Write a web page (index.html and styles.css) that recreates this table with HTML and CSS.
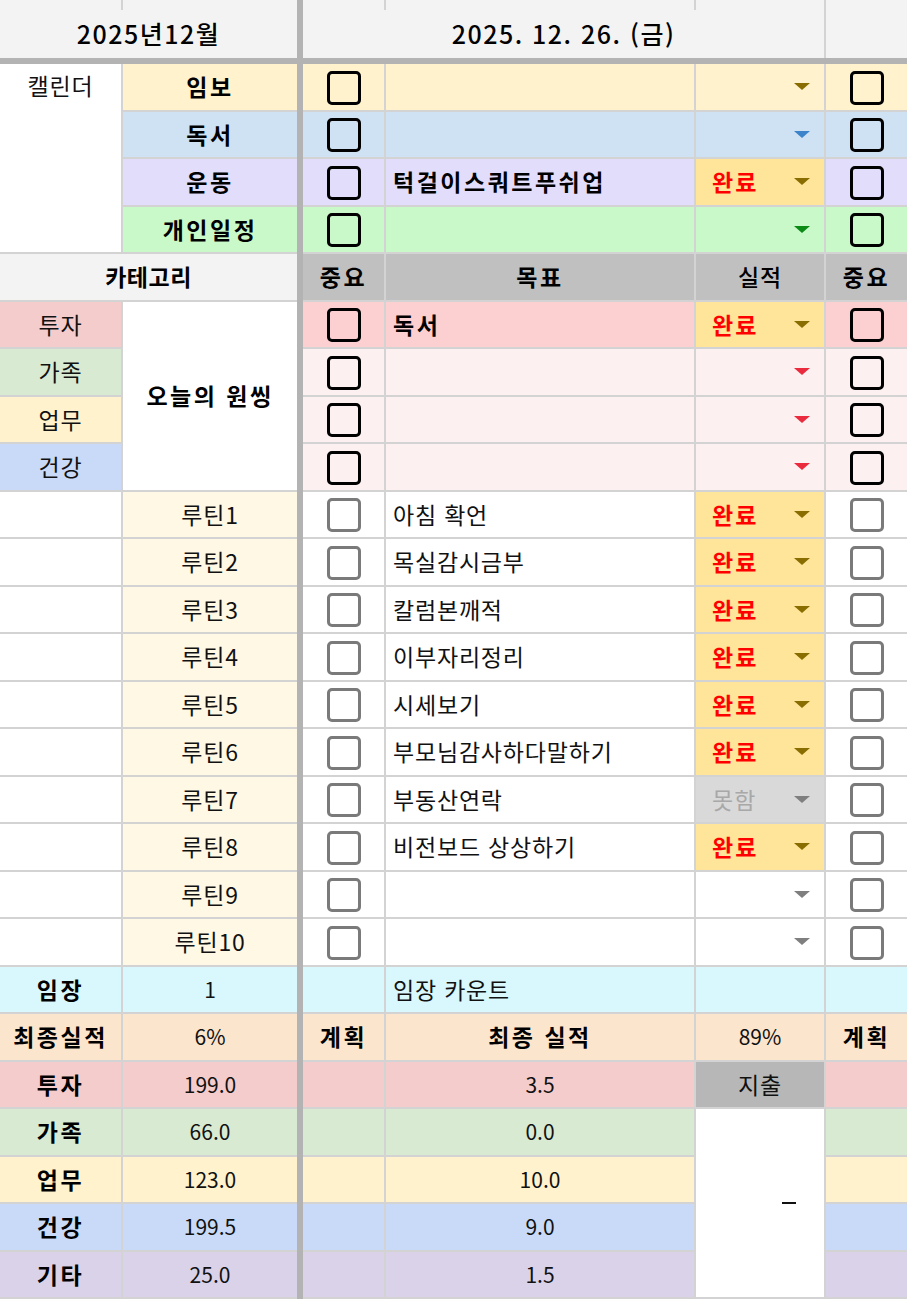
FILE: index.html
```html
<!DOCTYPE html>
<html lang="ko">
<head>
<meta charset="utf-8">
<title>2025년12월</title>
<link rel="stylesheet" href="styles.css">
</head>
<body>
<div class="sheet">
  <div class="side left">
    <div class="head head-left">
      <div class="stub"></div><div class="stub"></div>
      <div class="title span2">2025년12월</div>
    </div>
    <div class="hsep"></div>
    <div class="grid grid-left">
      <div class="c top rows4">캘린더</div>
      <div class="c b yellow">임보</div>
      <div class="c b blue">독서</div>
      <div class="c b lav">운동</div>
      <div class="c b green">개인일정</div>
      <div class="c b span2 hdr tight">카테고리</div>
      <div class="c pink">투자</div>
      <div class="c b rows4">오늘의 원씽</div>
      <div class="c sage">가족</div>
      <div class="c yellow">업무</div>
      <div class="c sky">건강</div>
      <div class="c"></div><div class="c cream">루틴1</div>
      <div class="c"></div><div class="c cream">루틴2</div>
      <div class="c"></div><div class="c cream">루틴3</div>
      <div class="c"></div><div class="c cream">루틴4</div>
      <div class="c"></div><div class="c cream">루틴5</div>
      <div class="c"></div><div class="c cream">루틴6</div>
      <div class="c"></div><div class="c cream">루틴7</div>
      <div class="c"></div><div class="c cream">루틴8</div>
      <div class="c"></div><div class="c cream">루틴9</div>
      <div class="c"></div><div class="c cream">루틴10</div>
      <div class="c b cyan">임장</div><div class="c cyan num">1</div>
      <div class="c b peach">최종실적</div><div class="c peach num">6%</div>
      <div class="c b pink">투자</div><div class="c pink num">199.0</div>
      <div class="c b sage">가족</div><div class="c sage num">66.0</div>
      <div class="c b yellow">업무</div><div class="c yellow num">123.0</div>
      <div class="c b sky">건강</div><div class="c sky num">199.5</div>
      <div class="c b purple">기타</div><div class="c purple num">25.0</div>
    </div>
  </div>
  <div class="vsep"></div>
  <div class="side right">
    <div class="head head-right">
      <div class="stub"></div><div class="stub"></div><div class="stub"></div>
      <div class="fcol"></div>
      <div class="title span3">2025. 12. 26. (금)</div>
    </div>
    <div class="hsep"></div>
    <div class="grid grid-right">
      <!-- calendar rows -->
      <div class="c yellow"><span class="cb"></span></div>
      <div class="c yellow txt"></div>
      <div class="c yellow dd"><span class="tri gold"></span></div>
      <div class="c yellow"><span class="cb"></span></div>

      <div class="c blue"><span class="cb"></span></div>
      <div class="c blue txt"></div>
      <div class="c blue dd"><span class="tri blue-t"></span></div>
      <div class="c blue"><span class="cb"></span></div>

      <div class="c lav"><span class="cb"></span></div>
      <div class="c lav txt b">턱걸이스쿼트푸쉬업</div>
      <div class="c done dd"><span class="done-t">완료</span><span class="tri gold"></span></div>
      <div class="c lav"><span class="cb"></span></div>

      <div class="c green"><span class="cb"></span></div>
      <div class="c green txt"></div>
      <div class="c green dd"><span class="tri green-t"></span></div>
      <div class="c green"><span class="cb"></span></div>

      <!-- header -->
      <div class="c gray b">중요</div>
      <div class="c gray b">목표</div>
      <div class="c gray m">실적</div>
      <div class="c gray b">중요</div>

      <!-- one thing -->
      <div class="c rose"><span class="cb"></span></div>
      <div class="c rose txt b">독서</div>
      <div class="c done dd"><span class="done-t">완료</span><span class="tri gold"></span></div>
      <div class="c rose"><span class="cb"></span></div>

      <div class="c blush"><span class="cb"></span></div>
      <div class="c blush txt"></div>
      <div class="c blush dd"><span class="tri red-t"></span></div>
      <div class="c blush"><span class="cb"></span></div>

      <div class="c blush"><span class="cb"></span></div>
      <div class="c blush txt"></div>
      <div class="c blush dd"><span class="tri red-t"></span></div>
      <div class="c blush"><span class="cb"></span></div>

      <div class="c blush"><span class="cb"></span></div>
      <div class="c blush txt"></div>
      <div class="c blush dd"><span class="tri red-t"></span></div>
      <div class="c blush"><span class="cb"></span></div>

      <!-- routines -->
      <div class="c"><span class="cb g"></span></div>
      <div class="c txt">아침 확언</div>
      <div class="c done dd"><span class="done-t">완료</span><span class="tri gold"></span></div>
      <div class="c"><span class="cb g"></span></div>

      <div class="c"><span class="cb g"></span></div>
      <div class="c txt">목실감시금부</div>
      <div class="c done dd"><span class="done-t">완료</span><span class="tri gold"></span></div>
      <div class="c"><span class="cb g"></span></div>

      <div class="c"><span class="cb g"></span></div>
      <div class="c txt">칼럼본깨적</div>
      <div class="c done dd"><span class="done-t">완료</span><span class="tri gold"></span></div>
      <div class="c"><span class="cb g"></span></div>

      <div class="c"><span class="cb g"></span></div>
      <div class="c txt">이부자리정리</div>
      <div class="c done dd"><span class="done-t">완료</span><span class="tri gold"></span></div>
      <div class="c"><span class="cb g"></span></div>

      <div class="c"><span class="cb g"></span></div>
      <div class="c txt">시세보기</div>
      <div class="c done dd"><span class="done-t">완료</span><span class="tri gold"></span></div>
      <div class="c"><span class="cb g"></span></div>

      <div class="c"><span class="cb g"></span></div>
      <div class="c txt">부모님감사하다말하기</div>
      <div class="c done dd"><span class="done-t">완료</span><span class="tri gold"></span></div>
      <div class="c"><span class="cb g"></span></div>

      <div class="c"><span class="cb g"></span></div>
      <div class="c txt">부동산연락</div>
      <div class="c miss dd"><span class="miss-t">못함</span><span class="tri gray-t"></span></div>
      <div class="c"><span class="cb g"></span></div>

      <div class="c"><span class="cb g"></span></div>
      <div class="c txt">비전보드 상상하기</div>
      <div class="c done dd"><span class="done-t">완료</span><span class="tri gold"></span></div>
      <div class="c"><span class="cb g"></span></div>

      <div class="c"><span class="cb g"></span></div>
      <div class="c txt"></div>
      <div class="c dd"><span class="tri gray-t"></span></div>
      <div class="c"><span class="cb g"></span></div>

      <div class="c"><span class="cb g"></span></div>
      <div class="c txt"></div>
      <div class="c dd"><span class="tri gray-t"></span></div>
      <div class="c"><span class="cb g"></span></div>

      <!-- summary -->
      <div class="c cyan"></div>
      <div class="c cyan txt">임장 카운트</div>
      <div class="c cyan"></div>
      <div class="c cyan"></div>

      <div class="c peach b">계획</div>
      <div class="c peach b">최종 실적</div>
      <div class="c peach num">89%</div>
      <div class="c peach b">계획</div>

      <div class="c pink"></div>
      <div class="c pink num">3.5</div>
      <div class="c spend">지출</div>
      <div class="c pink"></div>

      <div class="c sage"></div>
      <div class="c sage num">0.0</div>
      <div class="c rows4 dash"><span class="dash-bar"></span></div>
      <div class="c sage"></div>

      <div class="c yellow"></div>
      <div class="c yellow num">10.0</div>
      <div class="c yellow"></div>

      <div class="c sky"></div>
      <div class="c sky num">9.0</div>
      <div class="c sky"></div>

      <div class="c purple"></div>
      <div class="c purple num">1.5</div>
      <div class="c purple"></div>
    </div>
  </div>
</div>
</body>
</html>
```

FILE: styles.css
```css
html, body {
  margin: 0;
  padding: 0;
  background: #ffffff;
}
body {
  font-family: "Noto Sans CJK KR", "Noto Sans", sans-serif;
  font-size: 23px;
  letter-spacing: 0.8px;
  color: #111;
}
.sheet {
  display: flex;
  width: 907px;
}
.side {
  display: flex;
  flex-direction: column;
}
.left { width: 297px; }
.right { width: 604px; }
.vsep {
  width: 6px;
  background: #b3b3b3;
}
.hsep {
  height: 6px;
  background: #b3b3b3;
}
.head {
  display: grid;
  grid-template-rows: 10px 48px;
  column-gap: 2px;
  background: #d3d3d3;
}
.head > div { background: #f3f3f3; }
.head-left { grid-template-columns: 121px 174px; }
.head-right { grid-template-columns: 81px 308px 128px 81px; }
.fcol { grid-row: span 2; }
.title {
  display: flex;
  align-items: center;
  justify-content: center;
  font-size: 25px;
  font-weight: 500;
  letter-spacing: 1.5px;
  color: #000;
  line-height: 1;
  padding-bottom: 2px;
}
.span2 { grid-column: span 2; }
.span3 { grid-column: span 3; }
.rows4 { grid-row: span 4; }

.grid {
  display: grid;
  gap: 2px;
  grid-auto-rows: 45.5px;
  background: #d3d3d3;
  padding-bottom: 2px;
}
.grid-left { grid-template-columns: 121px 174px; }
.grid-right { grid-template-columns: 81px 308px 128px 81px; }

.c {
  display: flex;
  align-items: center;
  justify-content: center;
  background: #ffffff;
  white-space: nowrap;
  overflow: hidden;
  line-height: 1;
}
.b { font-weight: 700; letter-spacing: 2.5px; color: #000; }
.b.tight { letter-spacing: 0.5px; }
.m { font-weight: 500; color: #000; }
.top { align-items: flex-start; padding-top: 10px; }
.txt { justify-content: flex-start; padding-left: 7px; }
.num { font-size: 21px; letter-spacing: 0; }

/* colours */
.yellow { background: #fff2cc; }
.blue { background: #cfe2f3; }
.lav { background: #e2ddfb; }
.green { background: #c9f9c9; }
.hdr { background: #f3f3f3; }
.gray { background: #c0c0c0; }
.pink { background: #f4cccc; }
.rose { background: #fcd0d1; }
.blush { background: #fdf0f0; }
.sage { background: #d9ead3; }
.sky { background: #c9daf8; }
.cream { background: #fff8e5; }
.cyan { background: #d8f8fe; }
.peach { background: #fce5cd; }
.purple { background: #d9d2e9; }
.spend { background: #b7b7b7; }
.dash { background: #ffffff; padding-left: 58px; }
.dash-bar {
  width: 14px;
  height: 2px;
  background: #111;
}

/* checkbox */
.cb {
  width: 34px;
  height: 34px;
  box-sizing: border-box;
  border: 3.5px solid #000;
  border-radius: 5px;
  margin-top: 2px;
}
.cb.g { border-color: #7a7a7a; border-width: 3px; }

/* dropdown */
.dd {
  justify-content: flex-start;
  padding: 0 14px 0 16px;
}
.done { background: #ffe599; }
.miss { background: #d9d9d9; }
.done-t {
  color: #ff0000;
  font-weight: 700;
  letter-spacing: 2px;
}
.miss-t {
  color: #a8a8a8;
  letter-spacing: 1px;
}
.tri {
  margin-left: auto;
  width: 0;
  height: 0;
  border-left: 8.5px solid transparent;
  border-right: 8.5px solid transparent;
  border-top: 7.5px solid #8a6d00;
}
.tri.gold { border-top-color: #8a6d00; }
.tri.blue-t { border-top-color: #3c84c9; }
.tri.green-t { border-top-color: #0c8a16; }
.tri.red-t { border-top-color: #ea2a3d; }
.tri.gray-t { border-top-color: #7f7f7f; }
```
